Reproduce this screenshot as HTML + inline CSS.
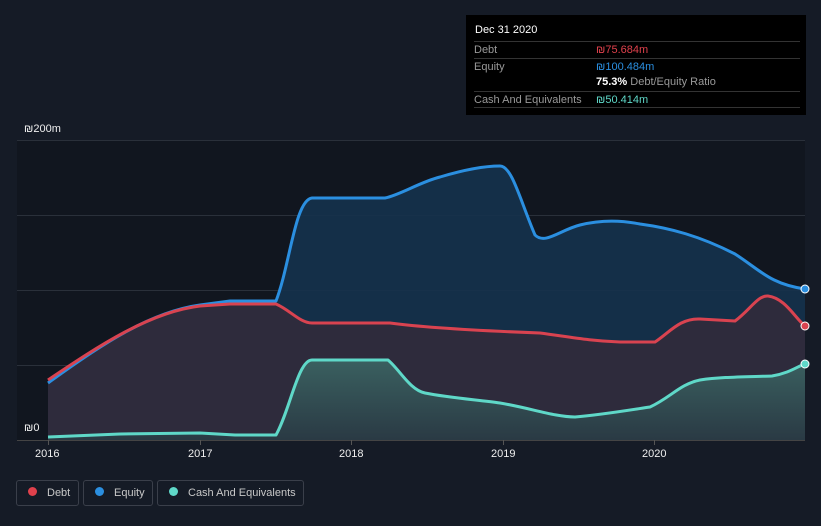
<!DOCTYPE html>
<html><head><meta charset="utf-8"><style>
body{margin:0;width:821px;height:526px;background:#151b26;font-family:"Liberation Sans",sans-serif;overflow:hidden;position:relative}
.tt{position:absolute;left:466px;top:15px;width:340px;height:100px;background:#000;color:#fff;font-size:11px}
.row{position:absolute;left:8px;width:326px;border-top:1px solid #333}
.lab{color:#999}
.leg{position:absolute;top:480px;height:26px;border:1px solid #3a3f4a;border-radius:3px;color:#c8c8c8;font-size:11px;line-height:24px;box-sizing:border-box;white-space:nowrap}
.leg i{display:inline-block;width:9px;height:9px;border-radius:50%;margin:0 10px 0 11px;vertical-align:-0px}
.ax{position:absolute;color:#eee;font-size:11px}
</style></head><body>
<svg width="821" height="526" style="position:absolute;left:0;top:0">
<rect x="17" y="140" width="788" height="300" fill="#11161f"/>
<defs>
<linearGradient id="cg" x1="0" y1="0" x2="0" y2="1"><stop offset="0" stop-color="#3a6060"/><stop offset="1" stop-color="#2a3a44"/></linearGradient>
</defs>
<g stroke="#2a303a" stroke-width="1">
<line x1="17" y1="140.5" x2="805" y2="140.5"/><line x1="17" y1="215.5" x2="805" y2="215.5"/><line x1="17" y1="290.5" x2="805" y2="290.5"/><line x1="17" y1="365.5" x2="805" y2="365.5"/><line x1="17" y1="440.5" x2="805" y2="440.5" stroke="#444"/>
</g>
<path d="M48,383 C100,345 150,312 200,305 L230,301 L276,301 C290,265 295,200 312,198 L385,198 C400,195 420,182 440,177 C470,168 490,166 500,166 C512,166 520,200 535,235 C545,245 560,230 580,225 C600,220 620,220 640,224 C670,228 700,236 735,254 C760,270 770,284 805,289 L805,440 L48,440Z" fill="#15324d" opacity="0.9"/>
<path d="M48,380 C100,345 150,312 200,306 L230,304 L276,304 C290,310 300,323 312,323 L390,323 C420,327 460,330 540,333 C570,337 590,341 620,342 L655,342 C670,332 680,318 700,319 L735,321 C750,310 758,295 768,296 C785,298 795,318 805,326 L805,440 L48,440Z" fill="#2e2b3c"/>
<path d="M48,437 L120,434 L200,433 L235,435 L276,435 C290,410 298,360 312,360 L388,360 C400,370 410,390 425,393 C450,398 480,400 500,403 C530,408 555,417 575,417 C600,415 630,410 650,407 C670,398 680,384 700,380 C720,377 740,377 772,376 C790,373 798,366 805,364 L805,440 L48,440Z" fill="url(#cg)"/>
<g fill="none" stroke-width="3" stroke-linejoin="round">
<path d="M48,383 C100,345 150,312 200,305 L230,301 L276,301 C290,265 295,200 312,198 L385,198 C400,195 420,182 440,177 C470,168 490,166 500,166 C512,166 520,200 535,235 C545,245 560,230 580,225 C600,220 620,220 640,224 C670,228 700,236 735,254 C760,270 770,284 805,289" stroke="#2b8fe0"/>
<path d="M48,380 C100,345 150,312 200,306 L230,304 L276,304 C290,310 300,323 312,323 L390,323 C420,327 460,330 540,333 C570,337 590,341 620,342 L655,342 C670,332 680,318 700,319 L735,321 C750,310 758,295 768,296 C785,298 795,318 805,326" stroke="#d94350"/>
<path d="M48,437 L120,434 L200,433 L235,435 L276,435 C290,410 298,360 312,360 L388,360 C400,370 410,390 425,393 C450,398 480,400 500,403 C530,408 555,417 575,417 C600,415 630,410 650,407 C670,398 680,384 700,380 C720,377 740,377 772,376 C790,373 798,366 805,364" stroke="#5fd8c8"/>
</g>
<circle cx="805" cy="289" r="4" fill="#2b8fe0" stroke="#fff" stroke-width="1"/>
<circle cx="805" cy="326" r="4" fill="#d94350" stroke="#fff" stroke-width="1"/>
<circle cx="805" cy="364" r="4" fill="#5fd8c8" stroke="#fff" stroke-width="1"/>
<g stroke="#555"><line x1="48.5" y1="440" x2="48.5" y2="445"/><line x1="200.5" y1="440" x2="200.5" y2="445"/><line x1="351.5" y1="440" x2="351.5" y2="445"/><line x1="503.5" y1="440" x2="503.5" y2="445"/><line x1="654.5" y1="440" x2="654.5" y2="445"/></g>
</svg>
<div class="ax" style="left:24px;top:123px">₪200m</div>
<div class="ax" style="left:24px;top:422px">₪0</div>
<div class="ax" style="left:35px;top:448px">2016</div>
<div class="ax" style="left:188px;top:448px">2017</div>
<div class="ax" style="left:339px;top:448px">2018</div>
<div class="ax" style="left:491px;top:448px">2019</div>
<div class="ax" style="left:642px;top:448px">2020</div>
<div class="tt">
<div style="position:absolute;left:9px;top:9px">Dec 31 2020</div>
<div class="row" style="top:26px;height:16px;line-height:16px"><span class="lab">Debt</span><span style="position:absolute;left:122px;color:#e0414c">₪75.684m</span></div>
<div class="row" style="top:43px;height:16px;line-height:16px"><span class="lab">Equity</span><span style="position:absolute;left:122px;color:#2b8fe0">₪100.484m</span></div>
<div style="position:absolute;left:130px;top:59px;line-height:16px"><b>75.3%</b> <span class="lab">Debt/Equity Ratio</span></div>
<div class="row" style="top:76px;height:16px;line-height:16px"><span class="lab">Cash And Equivalents</span><span style="position:absolute;left:122px;color:#5fd8c8">₪50.414m</span></div>
<div class="row" style="top:92px;height:0"></div>
</div>
<div class="leg" style="left:16px;width:63px"><i style="background:#e0414c"></i>Debt</div>
<div class="leg" style="left:83px;width:70px"><i style="background:#2b8fe0"></i>Equity</div>
<div class="leg" style="left:157px;width:147px"><i style="background:#5fd8c8"></i>Cash And Equivalents</div>
</body></html>
